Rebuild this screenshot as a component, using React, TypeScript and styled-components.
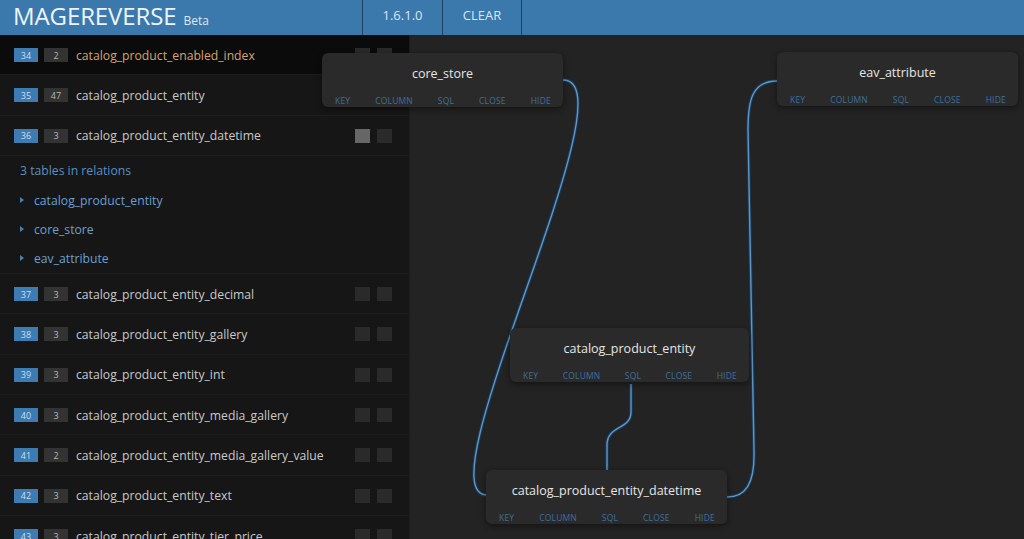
import styled, { createGlobalStyle } from 'styled-components';

const GlobalStyle = createGlobalStyle`
  html, body {
    margin: 0;
    padding: 0;
    background: #232323;
    font-family: "Open Sans", "Liberation Sans", sans-serif;
    overflow: hidden;
  }
  * { box-sizing: border-box; }
`;

const Page = styled.div`
  display: flex;
  flex-direction: column;
  width: 1024px;
  height: 539px;
  overflow: hidden;
`;

const Header = styled.header`
  display: flex;
  height: 35px;
  flex-shrink: 0;
  background: #3b79ad;
  color: #eef4fa;
`;

const Brand = styled.div`
  width: 362px;
  padding-left: 13px;
  display: flex;
  align-items: baseline;
  padding-top: 1px;
`;

const BrandName = styled.span`
  font-size: 24px;
  line-height: 30px;
  letter-spacing: -0.1px;
`;

const BrandTag = styled.span`
  font-size: 12px;
  margin-left: 7px;
  color: #dde8f2;
`;

const HeaderCell = styled.div`
  width: 80px;
  border-left: 1px solid #1d4366;
  display: flex;
  justify-content: center;
  padding-top: 6px;
  font-size: 13px;
  color: #d8e6f3;

  &:last-child {
    border-right: 1px solid #1d4366;
  }
`;

const Main = styled.div`
  display: flex;
  flex: 1;
  min-height: 0;
`;

const Sidebar = styled.aside`
  width: 410px;
  flex-shrink: 0;
  background: #161616;
  border-right: 1px solid #1c1c1c;
`;

const Row = styled.div<{ $active?: boolean }>`
  display: flex;
  align-items: center;
  height: 40.33px;
  padding: 1px 17px 0 14px;
  border-bottom: 1px solid #1d1d1d;
  background: ${(p) => (p.$active ? '#0b0b0b' : 'transparent')};
  color: ${(p) => (p.$active ? '#d6a46e' : '#c9c9c9')};
`;

const Badge = styled.span<{ $tone: 'blue' | 'gray' }>`
  width: 24px;
  height: 14px;
  margin-right: ${(p) => (p.$tone === 'blue' ? '6px' : '8px')};
  display: flex;
  align-items: center;
  justify-content: center;
  font-size: 9px;
  background: ${(p) => (p.$tone === 'blue' ? '#3d7bb3' : '#333333')};
  color: ${(p) => (p.$tone === 'blue' ? '#c9def0' : '#b8b8b8')};
`;

const RowName = styled.span`
  flex: 1;
  font-size: 12.2px;
  white-space: nowrap;
`;

const Toggles = styled.div`
  display: flex;
  gap: 7px;
`;

const Toggle = styled.span<{ $on?: boolean }>`
  width: 15px;
  height: 14px;
  background: ${(p) => (p.$on ? '#666666' : '#2a2a2a')};
`;

const Relations = styled.div`
  height: 118px;
  padding-left: 20px;
  border-bottom: 1px solid #1d1d1d;
`;

const RelationsTitle = styled.div`
  height: 30px;
  display: flex;
  align-items: center;
  font-size: 12.2px;
  color: #5b8fc1;
`;

const RelationItem = styled.div`
  height: 29px;
  display: flex;
  align-items: center;
  gap: 8px;
  font-size: 12.2px;
  color: #6b9fd1;

  &::before {
    content: '';
    border-left: 4px solid #4a7fb0;
    border-top: 3.5px solid transparent;
    border-bottom: 3.5px solid transparent;
    margin-right: 2px;
  }
`;

const Canvas = styled.section`
  position: relative;
  flex: 1;
  background: #232323;
`;

const Wires = styled.svg`
  position: absolute;
  left: 0;
  top: 0;
  width: 100%;
  height: 100%;
  overflow: visible;
`;

const Node = styled.div<{ $x: number; $y: number; $w: number }>`
  position: absolute;
  left: ${(p) => p.$x}px;
  top: ${(p) => p.$y}px;
  width: ${(p) => p.$w}px;
  height: 54px;
  background: #2a2a2a;
  border-radius: 6px;
  box-shadow: 0 2px 6px rgba(0, 0, 0, 0.45);
  display: flex;
  flex-direction: column;
`;

const NodeTitle = styled.div`
  height: 42px;
  padding-bottom: 2px;
  padding-top: 1px;
  display: flex;
  align-items: center;
  justify-content: center;
  font-size: 12.5px;
  color: #e6e6e6;
`;

const NodeActions = styled.div`
  display: flex;
  justify-content: space-between;
  padding: 0 12px 0 13px;
`;

const NodeAction = styled.span`
  font-size: 8.5px;
  color: #3f6f9c;
  letter-spacing: 0.2px;
`;

type TableRow = { id: number; cols: number; name: string; on?: boolean };

const before: TableRow[] = [
  { id: 34, cols: 2, name: 'catalog_product_enabled_index' },
  { id: 35, cols: 47, name: 'catalog_product_entity' },
  { id: 36, cols: 3, name: 'catalog_product_entity_datetime', on: true },
];

const after: TableRow[] = [
  { id: 37, cols: 3, name: 'catalog_product_entity_decimal' },
  { id: 38, cols: 3, name: 'catalog_product_entity_gallery' },
  { id: 39, cols: 3, name: 'catalog_product_entity_int' },
  { id: 40, cols: 3, name: 'catalog_product_entity_media_gallery' },
  { id: 41, cols: 2, name: 'catalog_product_entity_media_gallery_value' },
  { id: 42, cols: 3, name: 'catalog_product_entity_text' },
  { id: 43, cols: 3, name: 'catalog_product_entity_tier_price' },
];

const nodes = [
  { name: 'core_store', x: -88, y: 18, w: 241 },
  { name: 'eav_attribute', x: 367, y: 17, w: 241 },
  { name: 'catalog_product_entity', x: 100, y: 293, w: 239 },
  { name: 'catalog_product_entity_datetime', x: 76, y: 435, w: 241 },
];

const wires = [
  'M153,45 C225,45 10,460 77,460',
  'M367,46 C342,46 338,65 338,95 L344,415 C345,450 335,462 317,462',
  'M221,349 L221,377 C221,395 197,390 197,410 L197,435',
];

function TableListRow({ row, active }: { row: TableRow; active?: boolean }) {
  return (
    <Row $active={active}>
      <Badge $tone="blue">{row.id}</Badge>
      <Badge $tone="gray">{row.cols}</Badge>
      <RowName>{row.name}</RowName>
      <Toggles>
        <Toggle $on={row.on} />
        <Toggle />
      </Toggles>
    </Row>
  );
}

export default function App() {
  return (
    <Page>
      <GlobalStyle />
      <Header>
        <Brand>
          <BrandName>MAGEREVERSE</BrandName>
          <BrandTag>Beta</BrandTag>
        </Brand>
        <HeaderCell>1.6.1.0</HeaderCell>
        <HeaderCell>CLEAR</HeaderCell>
      </Header>
      <Main>
        <Sidebar>
          {before.map((r) => (
            <TableListRow key={r.id} row={r} active={r.id === 34} />
          ))}
          <Relations>
            <RelationsTitle>3 tables in relations</RelationsTitle>
            <RelationItem>catalog_product_entity</RelationItem>
            <RelationItem>core_store</RelationItem>
            <RelationItem>eav_attribute</RelationItem>
          </Relations>
          {after.map((r) => (
            <TableListRow key={r.id} row={r} />
          ))}
        </Sidebar>
        <Canvas>
          <Wires>
            {wires.map((d) => (
              <g key={d} fill="none">
                <path d={d} stroke="#1b3852" strokeWidth={3.5} />
                <path d={d} stroke="#5d97cb" strokeWidth={1.4} />
              </g>
            ))}
          </Wires>
          {nodes.map((n) => (
            <Node key={n.name} $x={n.x} $y={n.y} $w={n.w}>
              <NodeTitle>{n.name}</NodeTitle>
              <NodeActions>
                {['KEY', 'COLUMN', 'SQL', 'CLOSE', 'HIDE'].map((a) => (
                  <NodeAction key={a}>{a}</NodeAction>
                ))}
              </NodeActions>
            </Node>
          ))}
        </Canvas>
      </Main>
    </Page>
  );
}
